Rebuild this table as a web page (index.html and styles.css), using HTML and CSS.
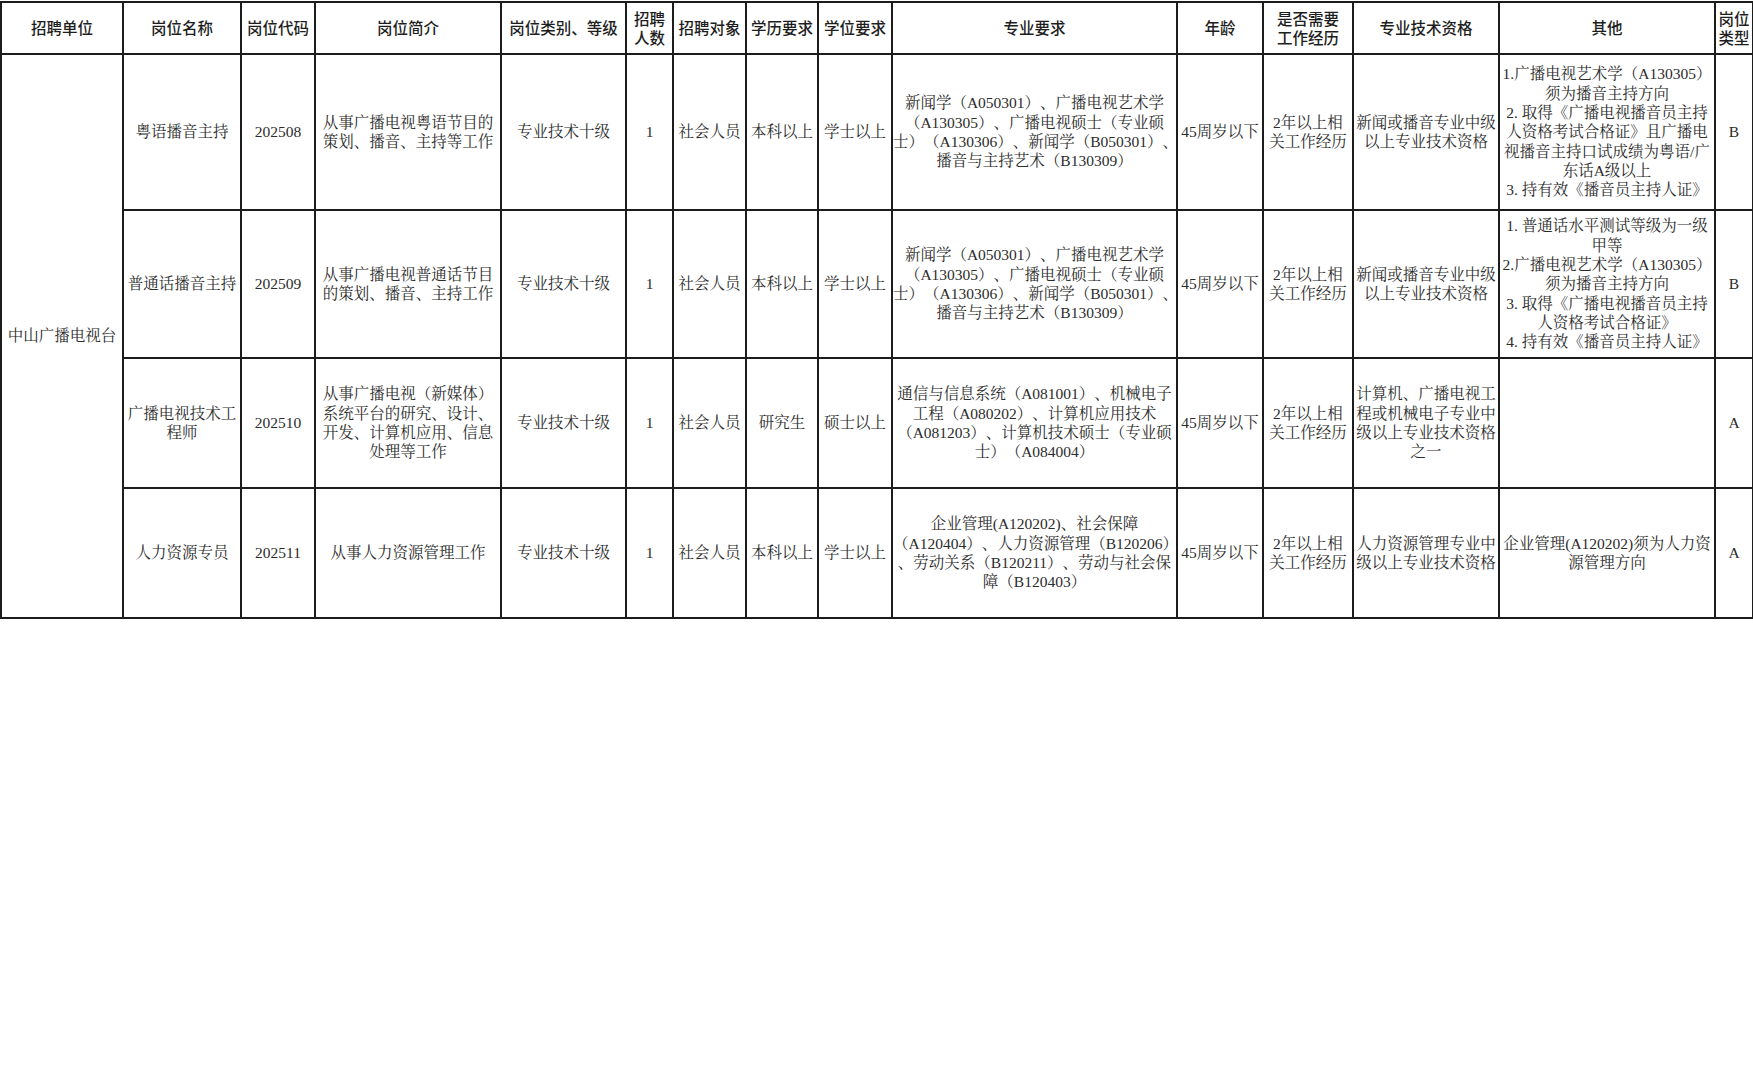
FILE: index.html
```html
<!DOCTYPE html>
<html lang="zh-CN">
<head>
<meta charset="utf-8">
<title>招聘岗位表</title>
<link rel="stylesheet" href="styles.css">
</head>
<body>
<table class="jobs">
  <colgroup>
    <col class="c-unit"><col class="c-name"><col class="c-code"><col class="c-desc"><col class="c-cat">
    <col class="c-num"><col class="c-target"><col class="c-edu"><col class="c-deg"><col class="c-major">
    <col class="c-age"><col class="c-exp"><col class="c-qual"><col class="c-other"><col class="c-type">
  </colgroup>
  <thead>
    <tr class="head">
      <th>招聘单位</th>
      <th>岗位名称</th>
      <th>岗位代码</th>
      <th>岗位简介</th>
      <th>岗位类别、等级</th>
      <th>招聘<br>人数</th>
      <th>招聘对象</th>
      <th>学历要求</th>
      <th>学位要求</th>
      <th>专业要求</th>
      <th>年龄</th>
      <th>是否需要<br>工作经历</th>
      <th>专业技术资格</th>
      <th>其他</th>
      <th>岗位<br>类型</th>
    </tr>
  </thead>
  <tbody>
    <tr class="r1">
      <td rowspan="4">中山广播电视台</td>
      <td>粤语播音主持</td>
      <td>202508</td>
      <td>从事广播电视粤语节目的<br>策划、播音、主持等工作</td>
      <td>专业技术十级</td>
      <td>1</td>
      <td>社会人员</td>
      <td>本科以上</td>
      <td>学士以上</td>
      <td>新闻学（A050301）、广播电视艺术学<br>（A130305）、广播电视硕士（专业硕<br>士）（A130306）、新闻学（B050301）、<br>播音与主持艺术（B130309）</td>
      <td>45周岁以下</td>
      <td>2年以上相<br>关工作经历</td>
      <td>新闻或播音专业中级<br>以上专业技术资格</td>
      <td>1.广播电视艺术学（A130305）<br>须为播音主持方向<br>2. 取得《广播电视播音员主持<br>人资格考试合格证》且广播电<br>视播音主持口试成绩为粤语/广<br>东话A级以上<br>3. 持有效《播音员主持人证》</td>
      <td>B</td>
    </tr>
    <tr class="r2">
      <td>普通话播音主持</td>
      <td>202509</td>
      <td>从事广播电视普通话节目<br>的策划、播音、主持工作</td>
      <td>专业技术十级</td>
      <td>1</td>
      <td>社会人员</td>
      <td>本科以上</td>
      <td>学士以上</td>
      <td>新闻学（A050301）、广播电视艺术学<br>（A130305）、广播电视硕士（专业硕<br>士）（A130306）、新闻学（B050301）、<br>播音与主持艺术（B130309）</td>
      <td>45周岁以下</td>
      <td>2年以上相<br>关工作经历</td>
      <td>新闻或播音专业中级<br>以上专业技术资格</td>
      <td>1. 普通话水平测试等级为一级<br>甲等<br>2.广播电视艺术学（A130305）<br>须为播音主持方向<br>3. 取得《广播电视播音员主持<br>人资格考试合格证》<br>4. 持有效《播音员主持人证》</td>
      <td>B</td>
    </tr>
    <tr class="r3">
      <td>广播电视技术工<br>程师</td>
      <td>202510</td>
      <td>从事广播电视（新媒体）<br>系统平台的研究、设计、<br>开发、计算机应用、信息<br>处理等工作</td>
      <td>专业技术十级</td>
      <td>1</td>
      <td>社会人员</td>
      <td>研究生</td>
      <td>硕士以上</td>
      <td>通信与信息系统（A081001）、机械电子<br>工程（A080202）、计算机应用技术<br>（A081203）、计算机技术硕士（专业硕<br>士）（A084004）</td>
      <td>45周岁以下</td>
      <td>2年以上相<br>关工作经历</td>
      <td>计算机、广播电视工<br>程或机械电子专业中<br>级以上专业技术资格<br>之一</td>
      <td></td>
      <td>A</td>
    </tr>
    <tr class="r4">
      <td>人力资源专员</td>
      <td>202511</td>
      <td>从事人力资源管理工作</td>
      <td>专业技术十级</td>
      <td>1</td>
      <td>社会人员</td>
      <td>本科以上</td>
      <td>学士以上</td>
      <td>企业管理(A120202)、社会保障<br>（A120404）、人力资源管理（B120206）<br>、劳动关系（B120211）、劳动与社会保<br>障（B120403）</td>
      <td>45周岁以下</td>
      <td>2年以上相<br>关工作经历</td>
      <td>人力资源管理专业中<br>级以上专业技术资格</td>
      <td>企业管理(A120202)须为人力资<br>源管理方向</td>
      <td>A</td>
    </tr>
  </tbody>
</table>
</body>
</html>
```

FILE: styles.css
```css
html, body {
  margin: 0;
  padding: 0;
  background: #ffffff;
}

.jobs {
  border-collapse: collapse;
  table-layout: fixed;
  width: 1752px;
  margin: 1px 0 0 0;
  color: #2a2a2a;
  text-spacing-trim: space-all;
}

.c-unit { width: 122px; }
.c-name { width: 118px; }
.c-code { width: 74px; }
.c-desc { width: 186px; }
.c-cat { width: 125px; }
.c-num { width: 47px; }
.c-target { width: 73px; }
.c-edu { width: 72px; }
.c-deg { width: 74px; }
.c-major { width: 285px; }
.c-age { width: 86px; }
.c-exp { width: 90px; }
.c-qual { width: 146px; }
.c-other { width: 216px; }
.c-type { width: 38px; }

.jobs th,
.jobs td {
  border: 2px solid #1c1c1c;
  padding: 0;
  text-align: center;
  vertical-align: middle;
  white-space: nowrap;
  overflow: hidden;
  text-spacing-trim: space-all;
}

.jobs th {
  font-family: "Noto Sans CJK SC", "Noto Sans", sans-serif;
  font-weight: 500;
  font-size: 15.5px;
  line-height: 19.5px;
  color: #1e1e1e;
}

.jobs td {
  font-family: "Liberation Serif", "Noto Serif CJK SC", "Noto Sans CJK SC", serif;
  font-weight: 400;
  font-size: 15.5px;
  line-height: 19.3px;
  color: #2c2c2c;
}

.head { height: 52px; }
.r1 { height: 156px; }
.r2 { height: 148px; }
.r3 { height: 130px; }
.r4 { height: 130px; }
```
